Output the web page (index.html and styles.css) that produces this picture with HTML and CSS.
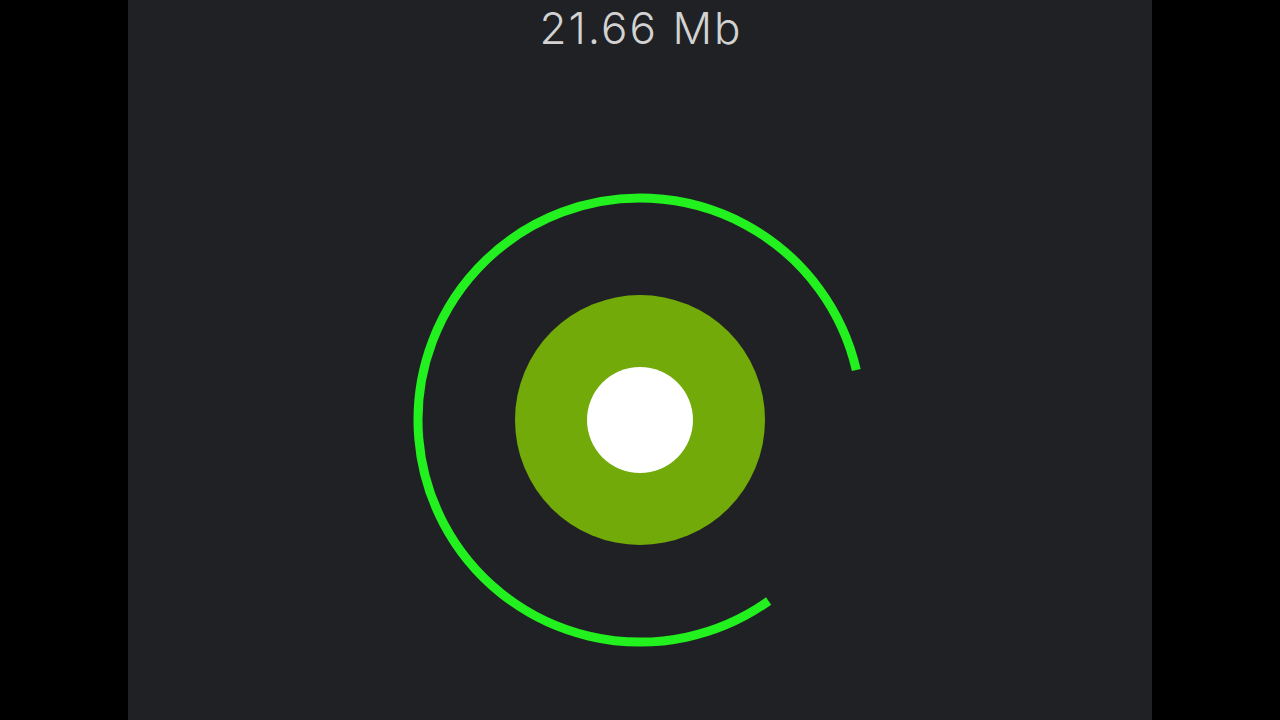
FILE: index.html
```html
<!DOCTYPE html>
<html lang="en">
<head>
<meta charset="utf-8">
<title>Download</title>
<link rel="stylesheet" href="styles.css">
</head>
<body>
<main class="panel">
  <header class="size">21.66 Mb</header>
  <svg class="gauge" width="1024" height="664" viewBox="0 0 1024 664" xmlns="http://www.w3.org/2000/svg">
    <g transform="translate(512 364)">
      <path d="M 128.6 181 A 222 222 0 1 1 216.3 -50" fill="none" stroke="#22f01f" stroke-width="9"/>
      <circle r="125" fill="#72aa0a"/>
      <circle r="53" fill="#ffffff"/>
    </g>
  </svg>
</main>
</body>
</html>
```
FILE: styles.css
```css
html, body {
  margin: 0;
  padding: 0;
  background: #000;
}
body {
  display: flex;
  justify-content: center;
  height: 720px;
  overflow: hidden;
}
.panel {
  width: 1024px;
  height: 720px;
  background: #202124;
  display: flex;
  flex-direction: column;
  align-items: center;
}
.size {
  height: 56px;
  line-height: 56px;
  font-family: "Inter", "Lato", sans-serif;
  font-weight: 300;
  font-size: 44px;
  color: #d2d2d2;
  letter-spacing: 2px;
  padding-left: 2px;
}
.gauge {
  display: block;
}
```
